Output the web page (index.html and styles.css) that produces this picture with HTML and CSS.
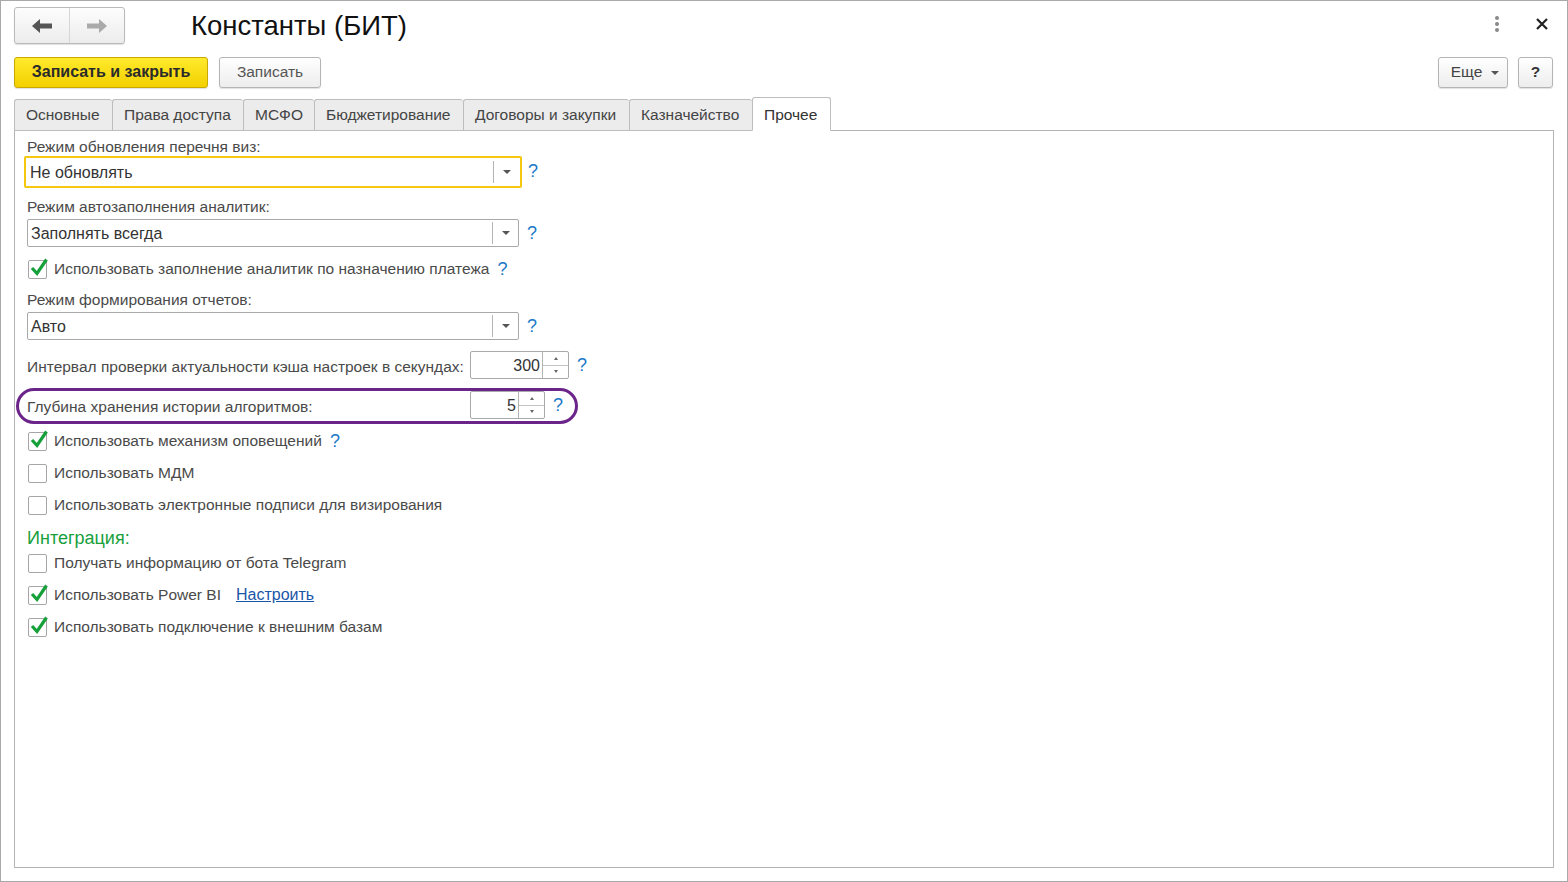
FILE: index.html
```html
<!DOCTYPE html>
<html lang="ru">
<head>
<meta charset="utf-8">
<title>Константы (БИТ)</title>
<link rel="stylesheet" href="styles.css">
</head>
<body>
<div class="window">
  <div class="header">
    <div class="nav">
      <button class="nav-btn" aria-label="Назад">
        <svg width="22" height="16" viewBox="0 0 22 16"><path d="M1 8 L9 1 L9 5.5 L21 5.5 L21 10.5 L9 10.5 L9 15 Z" fill="#555"/></svg>
      </button>
      <button class="nav-btn" aria-label="Вперёд">
        <svg width="22" height="16" viewBox="0 0 22 16"><path d="M21 8 L13 1 L13 5.5 L1 5.5 L1 10.5 L13 10.5 L13 15 Z" fill="#aaa"/></svg>
      </button>
    </div>
    <h1 class="title">Константы (БИТ)</h1>
    <div class="header-right">
      <span class="dots"><i></i><i></i><i></i></span>
      <span class="close">
        <svg width="14" height="14" viewBox="0 0 14 14"><path d="M2 2 L12 12 M12 2 L2 12" stroke="#222" stroke-width="2.2"/></svg>
      </span>
    </div>
  </div>

  <div class="toolbar">
    <button class="btn btn-primary">Записать и закрыть</button>
    <button class="btn">Записать</button>
    <div class="spacer"></div>
    <button class="btn btn-more">Еще <span class="caret"></span></button>
    <button class="btn btn-help">?</button>
  </div>

  <div class="tabs">
    <div class="tab">Основные</div>
    <div class="tab">Права доступа</div>
    <div class="tab">МСФО</div>
    <div class="tab">Бюджетирование</div>
    <div class="tab">Договоры и закупки</div>
    <div class="tab">Казначейство</div>
    <div class="tab active">Прочее</div>
  </div>

  <div class="panel">
    <div class="label l1">Режим обновления перечня виз:</div>
    <div class="field-row r-sel1">
      <div class="select focused"><span class="val">Не обновлять</span><span class="sel-btn"><span class="tri"></span></span></div>
      <span class="help">?</span>
    </div>

    <div class="label l2">Режим автозаполнения аналитик:</div>
    <div class="field-row r-sel2">
      <div class="select"><span class="val">Заполнять всегда</span><span class="sel-btn"><span class="tri"></span></span></div>
      <span class="help">?</span>
    </div>

    <div class="check-row c1">
      <span class="cb checked"><svg viewBox="0 0 20 20"><path d="M3 10 L8 15.5 L17.5 1.5" fill="none" stroke="#16a03a" stroke-width="3.2"/></svg></span>
      <span class="cb-text">Использовать заполнение аналитик по назначению платежа</span>
      <span class="help">?</span>
    </div>

    <div class="label l3">Режим формирования отчетов:</div>
    <div class="field-row r-sel3">
      <div class="select"><span class="val">Авто</span><span class="sel-btn"><span class="tri"></span></span></div>
      <span class="help">?</span>
    </div>

    <div class="field-row r-int">
      <span class="inline-label">Интервал проверки актуальности кэша настроек в секундах:</span>
      <div class="spin wide"><span class="num">300</span><span class="spin-btn"><span class="up"></span><span class="down"></span></span></div>
      <span class="help">?</span>
    </div>

    <div class="field-row r-depth">
      <span class="inline-label">Глубина хранения истории алгоритмов:</span>
      <div class="spin narrow"><span class="num">5</span><span class="spin-btn"><span class="up"></span><span class="down"></span></span></div>
      <span class="help">?</span>
    </div>

    <div class="check-row c2">
      <span class="cb checked"><svg viewBox="0 0 20 20"><path d="M3 10 L8 15.5 L17.5 1.5" fill="none" stroke="#16a03a" stroke-width="3.2"/></svg></span>
      <span class="cb-text">Использовать механизм оповещений</span>
      <span class="help">?</span>
    </div>
    <div class="check-row c3">
      <span class="cb"></span>
      <span class="cb-text">Использовать МДМ</span>
    </div>
    <div class="check-row c3">
      <span class="cb"></span>
      <span class="cb-text">Использовать электронные подписи для визирования</span>
    </div>

    <div class="group-title">Интеграция:</div>
    <div class="check-row c4">
      <span class="cb"></span>
      <span class="cb-text">Получать информацию от бота Telegram</span>
    </div>
    <div class="check-row c3">
      <span class="cb checked"><svg viewBox="0 0 20 20"><path d="M3 10 L8 15.5 L17.5 1.5" fill="none" stroke="#16a03a" stroke-width="3.2"/></svg></span>
      <span class="cb-text">Использовать Power BI</span>
      <a class="link" href="#">Настроить</a>
    </div>
    <div class="check-row c3">
      <span class="cb checked"><svg viewBox="0 0 20 20"><path d="M3 10 L8 15.5 L17.5 1.5" fill="none" stroke="#16a03a" stroke-width="3.2"/></svg></span>
      <span class="cb-text">Использовать подключение к внешним базам</span>
    </div>

    <div class="highlight"></div>
  </div>
</div>
</body>
</html>
```

FILE: styles.css
```css
* { box-sizing: border-box; }
html, body { margin: 0; padding: 0; background: #fff; }
body {
  font-family: "Liberation Sans", Arial, sans-serif;
  font-size: 15.5px;
  color: #4a4a4a;
}
.window {
  width: 1568px;
  height: 882px;
  border: 1px solid #a9a9a9;
  padding: 0 13px;
  display: flex;
  flex-direction: column;
}
.header {
  display: flex;
  height: 50px;
  padding-top: 6px;
  align-items: flex-start;
}
.nav {
  display: flex;
  width: 111px;
  height: 37px;
  border: 1px solid #b9b9b9;
  border-radius: 3px;
  background: linear-gradient(#fdfdfd, #ececec);
  box-shadow: 0 1px 1px rgba(0,0,0,0.12);
}
.nav-btn {
  flex: 1;
  border: none;
  background: transparent;
  display: flex;
  align-items: center;
  justify-content: center;
  padding: 0;
}
.nav-btn + .nav-btn { border-left: 1px solid #d6d6d6; }
.title {
  margin: 0 0 0 66px;
  font-weight: normal;
  font-size: 27.5px;
  line-height: 36px;
  color: #111;
  padding-top: 1px;
}
.header-right {
  margin-left: auto;
  display: flex;
  align-items: center;
  height: 34px;
  padding-right: 5px;
}
.dots {
  display: flex;
  flex-direction: column;
  gap: 2px;
  margin-right: 36px;
}
.dots i {
  width: 4px; height: 4px; border-radius: 50%; background: #888; display: block;
}
.close { display: flex; }

.toolbar {
  display: flex;
  align-items: center;
  height: 32px;
  margin-top: 5px;
}
.btn {
  height: 31px;
  border: 1px solid #b4b4b4;
  border-radius: 3px;
  background: linear-gradient(#ffffff, #ededed);
  box-shadow: 0 1px 1px rgba(0,0,0,0.12);
  font-family: inherit;
  font-size: 15.5px;
  color: #555;
  padding: 0 16px;
  margin-right: 11px;
}
.btn-primary {
  width: 194px;
  padding: 0;
  background: linear-gradient(#ffea2c, #f3d000);
  border-color: #c9a900;
  color: #2b2b2b;
  font-weight: bold;
  font-size: 16px;
}
.btn:not(.btn-primary) { width: 102px; }
.spacer { flex: 1; }
.btn-more { width: 70px !important; padding: 0 0 0 4px; margin-right: 10px; color: #444; display: flex; align-items: center; justify-content: center; gap: 9px; }
.caret { width: 0; height: 0; border-left: 4px solid transparent; border-right: 4px solid transparent; border-top: 4px solid #555; margin-top: 2px; }
.btn-help { width: 35px !important; padding: 0; margin-right: 1px; color: #333; font-weight: bold; }

.tabs {
  display: flex;
  margin-top: 11px;
  height: 32px;
  align-items: flex-end;
  position: relative;
  z-index: 1;
}
.tab {
  height: 32px;
  line-height: 30px;
  padding: 0 11px;
  background: #ececec;
  border: 1px solid #bdbdbd;
  border-right: none;
  border-radius: 3px 3px 0 0;
  color: #444;
  white-space: nowrap;
}
.tab:nth-child(1) { width: 98px; }
.tab:nth-child(2) { width: 131px; }
.tab:nth-child(3) { width: 71px; }
.tab:nth-child(4) { width: 149px; }
.tab:nth-child(5) { width: 166px; }
.tab:nth-child(6) { width: 123px; }
.tab.active {
  width: 79px;
  height: 34px;
  background: #fff;
  border-right: 1px solid #bdbdbd;
  border-bottom-color: #fff;
  line-height: 33px;
  color: #333;
}

.panel {
  position: relative;
  flex: 1;
  margin-top: -1px;
  margin-bottom: 13px;
  border: 1px solid #b4b4b4;
  padding: 5px 12px 0 12px;
  display: flex;
  flex-direction: column;
  align-items: flex-start;
}
.label { line-height: 22px; height: 22px; white-space: nowrap; }
.l2 { margin-top: 8px; }
.l3 { margin-top: 9px; }
.field-row { display: flex; align-items: center; white-space: nowrap; }
.r-sel1 { margin-top: -2px; margin-left: -3px; }
.r-sel2 { margin-top: 1px; }
.r-sel3 { margin-top: 1px; }
.select {
  display: flex;
  align-items: stretch;
  width: 492px;
  height: 28px;
  border: 1px solid #a9a9a9;
  border-radius: 2px;
  background: #fff;
}
.select.focused {
  width: 498px;
  height: 32px;
  border: 2px solid #f5c70f;
  padding: 1px;
}
.select .val {
  flex: 1;
  padding-left: 3px;
  line-height: 27px;
  color: #333;
  font-size: 16px;
}
.sel-btn {
  width: 26px;
  display: flex;
  align-items: center;
  justify-content: center;
  margin: 2px 0;
  border-left: 1px solid #b4b4b4;
}
.tri { width: 0; height: 0; border-left: 4px solid transparent; border-right: 4px solid transparent; border-top: 4px solid #555; }
.help {
  color: #1b78c9;
  margin-left: 8px;
  font-size: 18px;
}
.r-sel1 .help { margin-left: 6px; margin-top: -2px; }

.check-row { display: flex; align-items: center; height: 22px; white-space: nowrap; }
.c1 { margin-top: 11px; }
.c2 { margin-top: 11px; }
.c3 { margin-top: 10px; }
.c4 { margin-top: 2px; }
.cb {
  width: 19px;
  height: 19px;
  border: 1px solid #a6a6a6;
  border-radius: 2px;
  background: #fff;
  margin-left: 1px;
  margin-right: 7px;
  position: relative;
}
.cb svg { position: absolute; left: 0; top: -3px; width: 20px; height: 20px; overflow: visible; }
.cb-text { color: #4a4a4a; }
.check-row .help { margin-left: 8px; }
.link { color: #1a56a8; margin-left: 15px; font-size: 16px; text-decoration: underline; }

.r-int { margin-top: 11px; height: 28px; }
.r-depth { margin-top: 12px; height: 28px; }
.inline-label { width: 443px; padding-top: 4px; }
.spin {
  display: flex;
  border: 1px solid #a9a9a9;
  border-radius: 2px;
  height: 100%;
}
.spin.wide { width: 99px; }
.spin.narrow { width: 75px; }
.spin .num { flex: 1; text-align: right; padding-right: 2px; line-height: 28px; color: #333; font-size: 16px; }
.spin-btn {
  width: 26px;
  border-left: 1px solid #b4b4b4;
  display: flex;
  flex-direction: column;
}
.spin-btn .up, .spin-btn .down { flex: 1; display: flex; align-items: center; justify-content: center; }
.spin-btn .up { border-bottom: 1px solid #c4c4c4; }
.spin-btn .up::after { content: ""; border-left: 2px solid transparent; border-right: 2px solid transparent; border-bottom: 3px solid #666; }
.spin-btn .down::after { content: ""; border-left: 2px solid transparent; border-right: 2px solid transparent; border-top: 3px solid #666; }
.r-int .help, .r-depth .help { margin-left: 8px; }

.group-title {
  color: #17a03c;
  font-size: 18px;
  margin-top: 10px;
  height: 24px;
  line-height: 24px;
}

.highlight {
  position: absolute;
  left: 1px;
  top: 257px;
  width: 562px;
  height: 36px;
  border: 3px solid #6b2489;
  border-radius: 18px;
  pointer-events: none;
}
```
